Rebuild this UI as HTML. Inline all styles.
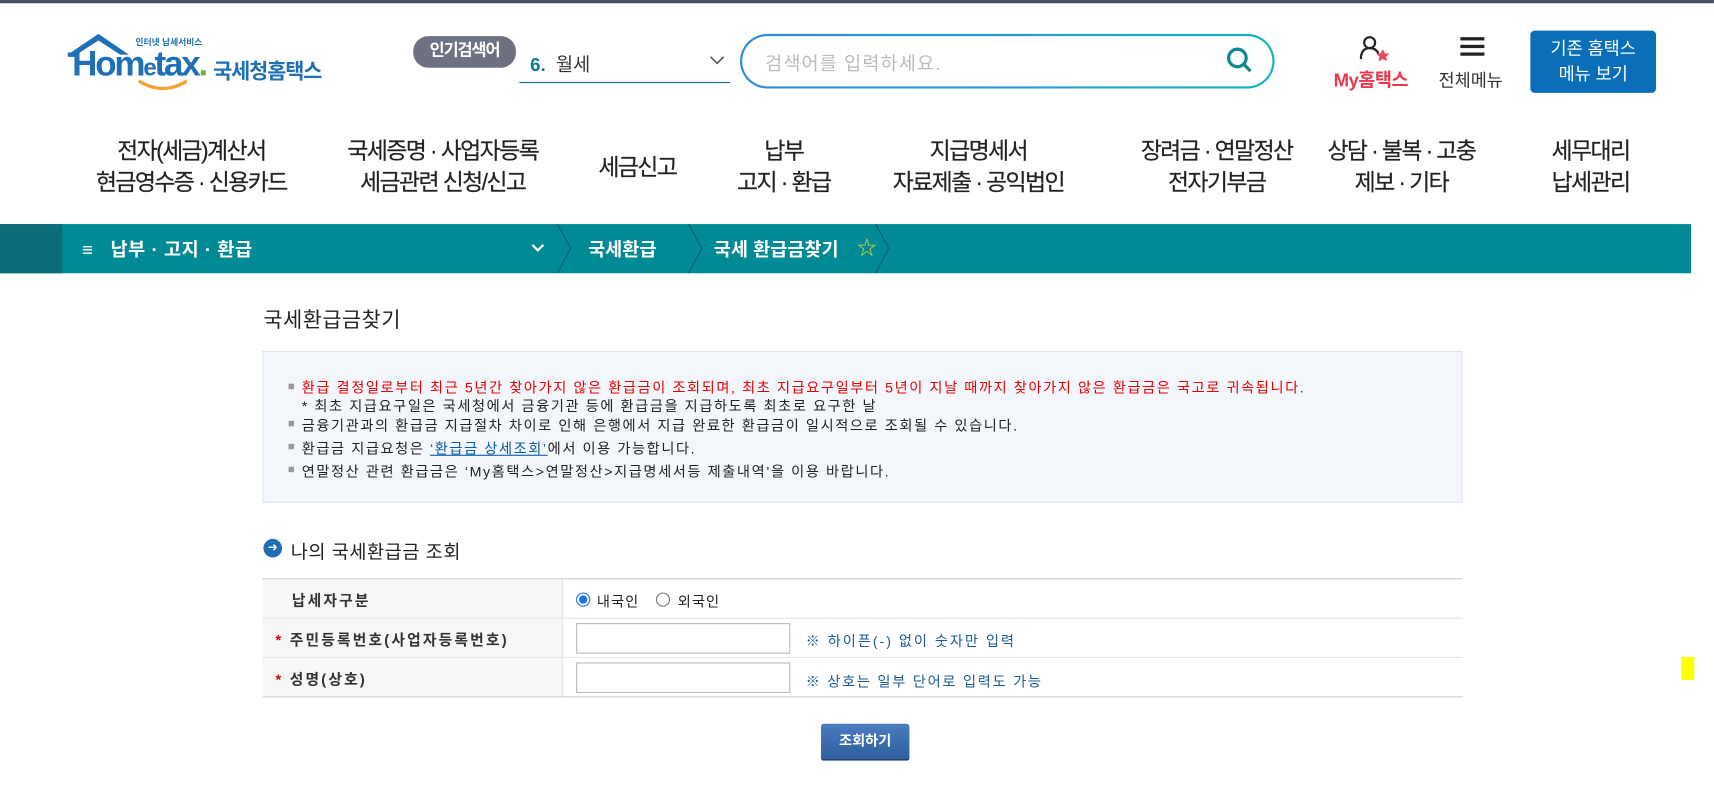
<!DOCTYPE html>
<html><head><meta charset="utf-8">
<style>
*{margin:0;padding:0;box-sizing:border-box}
html,body{width:1714px;height:812px;overflow:hidden;background:#fff}
body{font-family:"Liberation Sans","Noto Sans CJK KR",sans-serif;color:#222}
#w{position:absolute;left:0;top:0;width:1568px;height:743px;transform:scale(1.0931);transform-origin:0 0}
.a{position:absolute;white-space:nowrap}
.nav{position:absolute;top:124px;text-align:center;font-size:21px;line-height:29px;letter-spacing:-1.5px;color:#222;transform:translateX(-50%);-webkit-text-stroke:0.15px #222}
.info div{position:absolute;left:22px;font-size:13px;white-space:nowrap;color:#222;letter-spacing:1.45px}
.info .b{position:absolute;left:22px;width:5px;height:5px;background:#999}
.lb{font-size:13.5px;font-weight:bold;color:#333;letter-spacing:2px}
</style></head><body><div id="w">
<div class="a" style="left:0;top:0;width:1568px;height:3px;background:#4a5068"></div>

<svg class="a" style="left:60px;top:28px" width="90" height="30" viewBox="0 0 90 30"><path d="M2 22 L30 3 L58 22 L50 22 L30 9 L10 22Z" fill="#1e6fb5"/><rect x="2" y="20" width="8" height="4" fill="#1e6fb5"/></svg>
<div class="a" style="left:124px;top:33px;font-size:8px;color:#1e6fb5;font-weight:bold">인터넷 납세서비스</div>
<div class="a" style="left:66px;top:40px;font-size:32px;font-weight:bold;color:#1e6fb5;letter-spacing:-2px">Hom<span style="font-size:22px">e</span>tax<span style="color:#6ab53c">.</span></div>
<svg class="a" style="left:125px;top:72px" width="50" height="14"><path d="M2 2 Q24 16 46 2" stroke="#f3a33a" stroke-width="3" fill="none"/></svg>
<div class="a" style="left:195px;top:51px;font-size:19px;font-weight:bold;color:#1e6fb5;letter-spacing:-1px">국세청홈택스</div>

<div class="a" style="left:378px;top:33px;width:94px;height:29px;background:#6d7182;border-radius:14px;color:#fff;font-size:15px;font-weight:bold;text-align:center;line-height:28px;letter-spacing:-1px">인기검색어</div>
<div class="a" style="left:485px;top:45px;font-size:17px;color:#333"><b style="color:#0b7c8a">6.</b>&nbsp; 월세</div>
<svg class="a" style="left:648px;top:50px" width="16" height="10"><path d="M2 2 L8 8 L14 2" stroke="#555" stroke-width="1.5" fill="none"/></svg>
<div class="a" style="left:475px;top:75px;width:193px;height:1px;background:#0b6e78"></div>

<div class="a" style="left:677px;top:31px;width:489px;height:50px;border-radius:25px;background:linear-gradient(90deg,#2f8be0,#18b1c0);padding:2px"><div style="width:100%;height:100%;border-radius:23px;background:#fff"></div></div>
<div class="a" style="left:700px;top:44px;font-size:17px;color:#bbb;letter-spacing:1px">검색어를 입력하세요.</div>
<svg class="a" style="left:1121px;top:42px" width="26" height="26"><circle cx="11" cy="11" r="8" stroke="#0d8a96" stroke-width="3" fill="none"/><path d="M17 17 L23 23" stroke="#0d8a96" stroke-width="3"/></svg>

<svg class="a" style="left:1243px;top:32px" width="32" height="26"><circle cx="10" cy="7" r="5" stroke="#222" stroke-width="2" fill="none"/><path d="M2 22 Q2 12 10 12 Q16 12 18 17" stroke="#222" stroke-width="2" fill="none"/><path d="M22 13 L24 17 L28 17 L25 20 L26 24 L22 22 L18 24 L19 20 L16 17 L20 17Z" fill="#e8495c"/></svg>
<div class="a" style="left:1220px;top:59px;font-size:17px;font-weight:bold;color:#e8384f;letter-spacing:-0.5px">My홈택스</div>
<div class="a" style="left:1336px;top:34px;width:22px;height:3px;background:#222;box-shadow:0 7px 0 #222,0 14px 0 #222"></div>
<div class="a" style="left:1316px;top:60px;font-size:16px;color:#333">전체메뉴</div>
<div class="a" style="left:1400px;top:28px;width:115px;height:57px;background:#0a6fb8;border-radius:4px;color:#fff;font-size:16px;text-align:center;line-height:23px;padding-top:6px">기존 홈택스<br>메뉴 보기</div>

<div class="nav" style="left:175px">전자(세금)계산서<br>현금영수증 · 신용카드</div>
<div class="nav" style="left:405px">국세증명 · 사업자등록<br>세금관련 신청/신고</div>
<div class="nav" style="left:583px;top:139px">세금신고</div>
<div class="nav" style="left:717px">납부<br>고지 · 환급</div>
<div class="nav" style="left:895px">지급명세서<br>자료제출 · 공익법인</div>
<div class="nav" style="left:1113px">장려금 · 연말정산<br>전자기부금</div>
<div class="nav" style="left:1282px">상담 · 불복 · 고충<br>제보 · 기타</div>
<div class="nav" style="left:1455px">세무대리<br>납세관리</div>

<div class="a" style="left:0;top:205px;width:1547px;height:45px;background:#008a96"></div>
<div class="a" style="left:0;top:205px;width:57px;height:45px;background:#0b6e78"></div>
<div class="a" style="left:75px;top:214px;font-size:17px;font-weight:bold;color:#fff;letter-spacing:0.5px">≡&nbsp;&nbsp; 납부 · 고지 · 환급</div>
<svg class="a" style="left:485px;top:222px" width="14" height="10"><path d="M2 2 L7 7 L12 2" stroke="#fff" stroke-width="2" fill="none"/></svg>
<svg class="a" style="left:505px;top:205px" width="320" height="45"><g stroke="#0b5e66" stroke-width="1" fill="none"><path d="M5 0 L17 22 L5 45"/><path d="M125 0 L137 22 L125 45"/><path d="M296 0 L308 22 L296 45"/></g></svg>
<div class="a" style="left:538px;top:214px;font-size:17px;font-weight:bold;color:#fff">국세환급</div>
<div class="a" style="left:653px;top:214px;font-size:17px;font-weight:bold;color:#fff">국세 환급금찾기</div>
<div class="a" style="left:784px;top:213px;font-size:18px;color:#e6d23a">☆</div>

<div class="a" style="left:241px;top:278px;font-size:19px;color:#222;letter-spacing:0.5px">국세환급금찾기</div>
<div class="a info" style="left:240px;top:321px;width:1098px;height:139px;background:#f3f6fb;border:1px solid #dde3ec">
<span class="b" style="top:29px;left:23px"></span><div style="top:22px;left:35px;color:#e60000">환급 결정일로부터 최근 5년간 찾아가지 않은 환급금이 조회되며, 최초 지급요구일부터 5년이 지날 때까지 찾아가지 않은 환급금은 국고로 귀속됩니다.</div>
<div style="top:39px;left:35px">* 최초 지급요구일은 국세청에서 금융기관 등에 환급금을 지급하도록 최초로 요구한 날</div>
<span class="b" style="top:63px;left:23px"></span><div style="top:57px;left:35px">금융기관과의 환급금 지급절차 차이로 인해 은행에서 지급 완료한 환급금이 일시적으로 조회될 수 있습니다.</div>
<span class="b" style="top:84px;left:23px"></span><div style="top:78px;left:35px">환급금 지급요청은 <span style="color:#0a5aa8;text-decoration:underline">‘환급금 상세조회’</span>에서 이용 가능합니다.</div>
<span class="b" style="top:105px;left:23px"></span><div style="top:99px;left:35px">연말정산 관련 환급금은 ‘My홈택스&gt;연말정산&gt;지급명세서등 제출내역’을 이용 바랍니다.</div>
</div>

<div class="a" style="left:241px;top:493px;width:17px;height:17px;border-radius:50%;background:#1f6db5;color:#fff;font-size:11px;text-align:center;line-height:16px">➜</div>
<div class="a" style="left:266px;top:491px;font-size:17px;color:#222;letter-spacing:0.5px">나의 국세환급금 조회</div>

<div class="a" style="left:240px;top:529px;width:1098px;height:109px;border-top:1px solid #ccc;border-bottom:1px solid #ccc"></div>
<div class="a" style="left:240px;top:530px;width:274px;height:107px;background:#f7f7f7"></div>
<div class="a" style="left:240px;top:565px;width:1098px;height:1px;background:#e5e5e5"></div>
<div class="a" style="left:240px;top:601px;width:1098px;height:1px;background:#e5e5e5"></div>
<div class="a" style="left:514px;top:530px;width:1px;height:107px;background:#e5e5e5"></div>
<div class="a lb" style="left:267px;top:538px">납세자구분</div>
<div class="a lb" style="left:252px;top:574px"><span style="color:#d00">*</span> 주민등록번호(사업자등록번호)</div>
<div class="a lb" style="left:252px;top:610px"><span style="color:#d00">*</span> 성명(상호)</div>
<div class="a" style="left:527px;top:542px;width:13px;height:13px;border-radius:50%;border:1px solid #1a73e8;background:radial-gradient(circle,#1a73e8 3.5px,#fff 4px)"></div>
<div class="a" style="left:546px;top:540px;font-size:13px;letter-spacing:1px">내국인</div>
<div class="a" style="left:600px;top:542px;width:13px;height:13px;border-radius:50%;border:1px solid #777;background:#fff"></div>
<div class="a" style="left:620px;top:540px;font-size:13px;letter-spacing:1px">외국인</div>
<div class="a" style="left:527px;top:570px;width:196px;height:28px;border:1px solid #bbb;background:#fff"></div>
<div class="a" style="left:527px;top:606px;width:196px;height:28px;border:1px solid #bbb;background:#fff"></div>
<div class="a" style="left:737px;top:576px;font-size:13px;color:#1a5a96;letter-spacing:1.8px">※ 하이픈(-) 없이 숫자만 입력</div>
<div class="a" style="left:737px;top:613px;font-size:13px;color:#1a5a96;letter-spacing:1.6px">※ 상호는 일부 단어로 입력도 가능</div>

<div class="a" style="left:751px;top:662px;width:81px;height:34px;background:linear-gradient(#4a7cc0,#2f5f9f);border-radius:3px;border-bottom:2px solid #22467a;color:#fff;font-size:13px;font-weight:bold;text-align:center;line-height:32px">조회하기</div>

<div class="a" style="left:1538px;top:601px;width:12px;height:21px;background:#ffff00"></div>
</div></body></html>
